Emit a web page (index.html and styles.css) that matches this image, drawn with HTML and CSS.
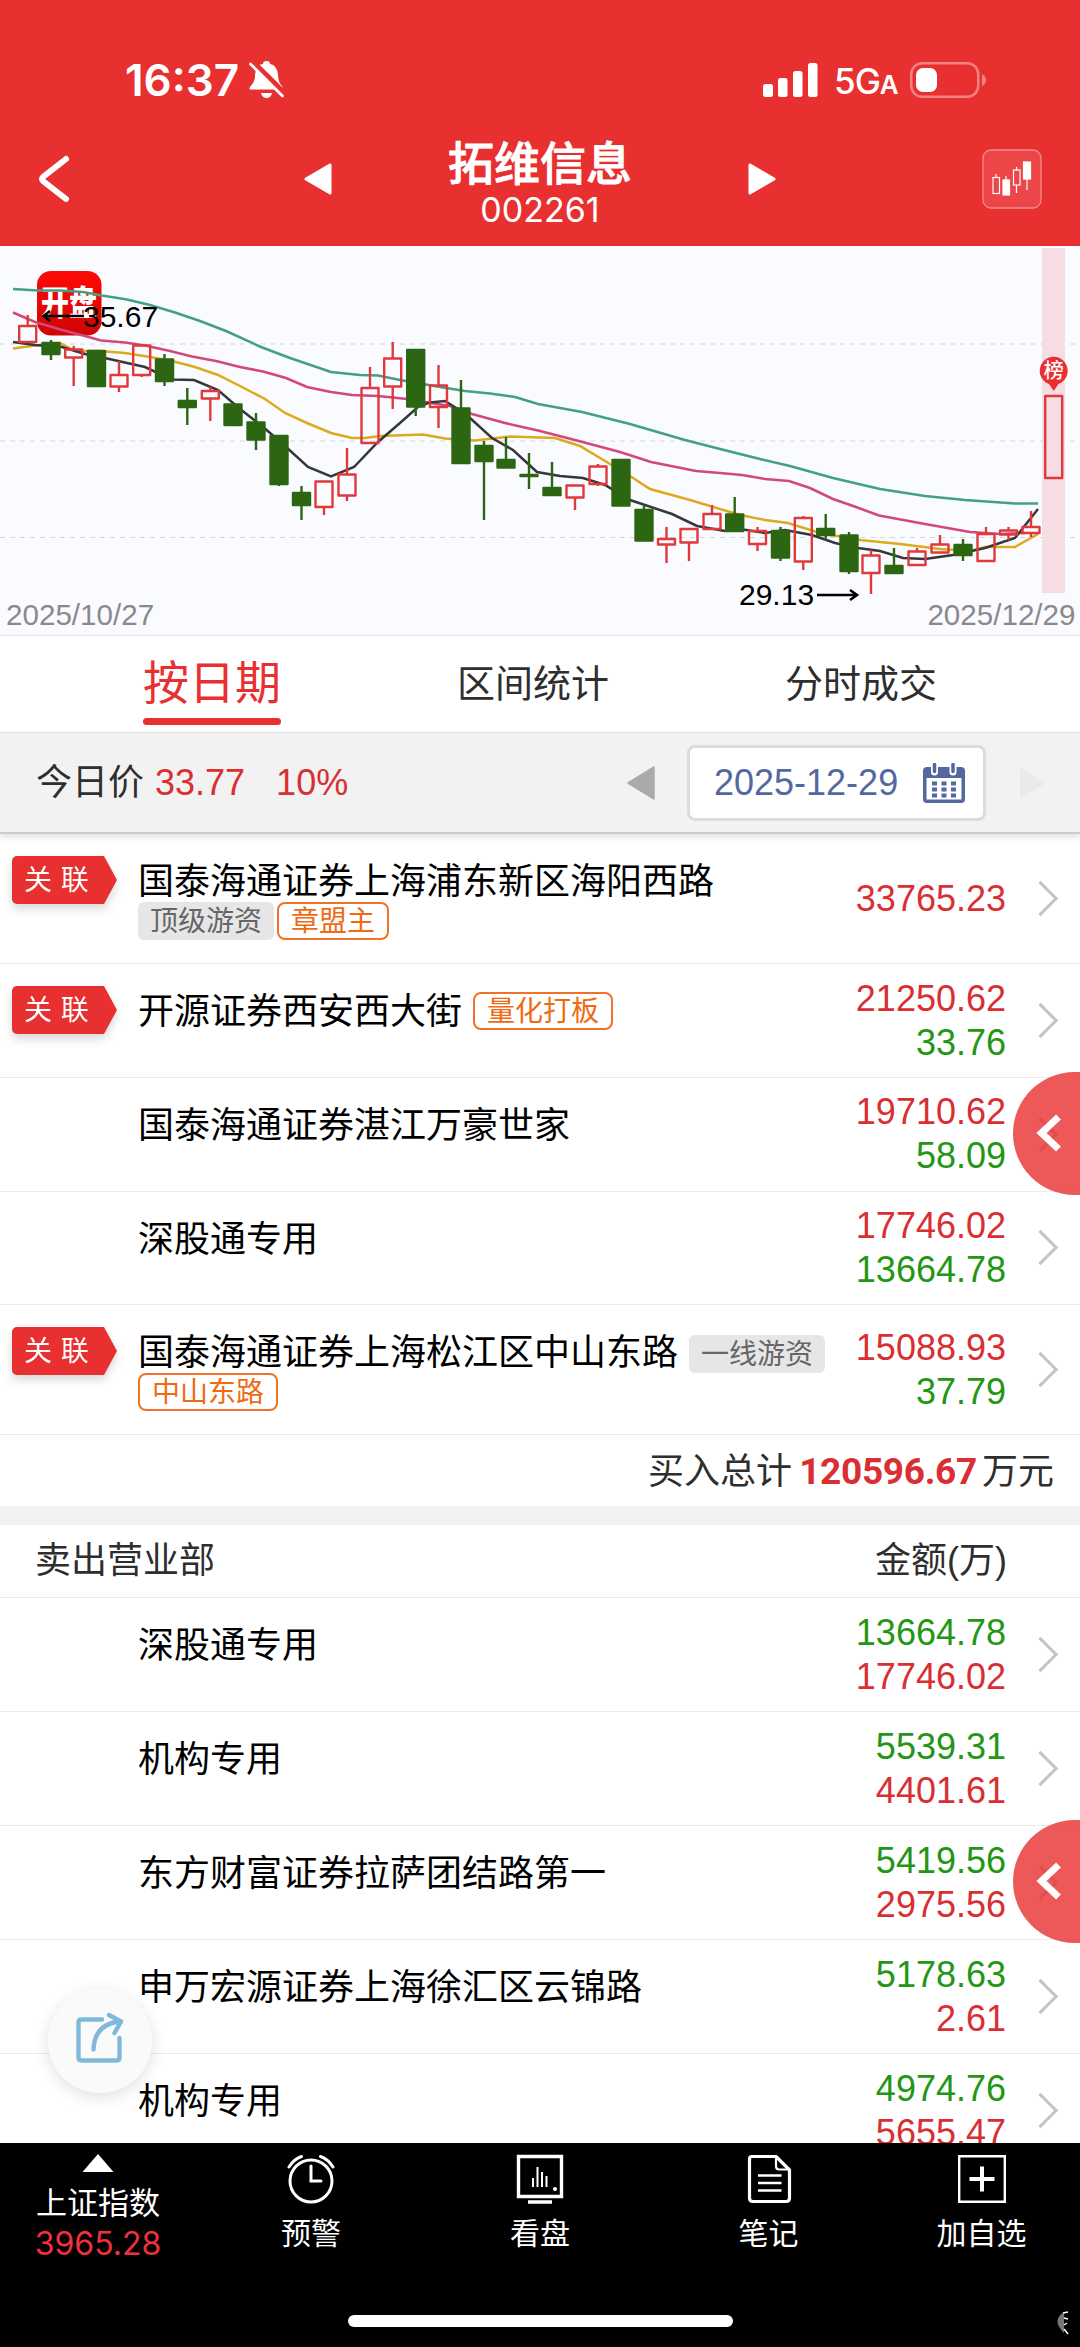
FILE: index.html
```html
<!DOCTYPE html>
<html lang="zh-CN">
<head>
  <meta charset="UTF-8" />
  <meta name="viewport" content="width=device-width, initial-scale=1.0" />
  <title>拓维信息 002261</title>
  <link rel="stylesheet" href="styles.css">
</head>
<body>
  <header>
    <div class="status-bar">
      <div class="status-left">
        <span class="time">16:37</span>
        <svg class="bell" width="36" height="38" viewBox="0 0 36 38">
          <path d="M5 25 V27 Q5 28.500 2 28.500 H1 Q0 28 1 26 Q5 22 6 17 V14 Q7 3 14 3 Q14 0 17.500 0 Q21 0 21 3 Q28 4 29 14 Q29.500 22 33 25 Q34.500 28.500 32 28.500 H3 Z M12 32 H23 Q22 37 17.500 37 Q13 37 12 32 Z" fill="#fff"/>
          <path d="M2 0 L36 34" stroke="#e83030" stroke-width="7"/>
          <path d="M1.500 3 L33.500 35" stroke="#fff" stroke-width="2.800" stroke-linecap="round"/>
        </svg>
      </div>
      <div class="status-right">
        <svg width="55" height="36" viewBox="0 0 55 36" fill="#fff">
          <rect x="0" y="22" width="10" height="13" rx="2.500"/>
          <rect x="15" y="16" width="9.500" height="19" rx="2.500"/>
          <rect x="30" y="9" width="9.500" height="26" rx="2.500"/>
          <rect x="45" y="1" width="9.500" height="34" rx="2.500"/>
        </svg>
        <span class="network">5G<small>A</small></span>
        <svg width="77" height="36" viewBox="0 0 77 36">
          <rect x="1.250" y="1.250" width="67" height="33.500" rx="11" fill="none" stroke="#f58080" stroke-width="2.500"/>
          <rect x="6" y="6" width="21" height="24" rx="7" fill="#fff"/>
          <path d="M72 12 Q76 14 76 18 Q76 22 72 24 Z" fill="#f58080"/>
        </svg>
      </div>
    </div>
    <div class="nav-bar">
      <svg class="back" width="34" height="48" viewBox="0 0 34 48">
        <path d="M29 4 L6 22 Q4 24 6 26 L29 44" fill="none" stroke="#fff" stroke-width="6" stroke-linecap="round"/>
      </svg>
      <svg width="28" height="32" viewBox="0 0 28 32"><path d="M26 2 V30 L2 16 Z" fill="#fff" stroke="#fff" stroke-width="3" stroke-linejoin="round"/></svg>
      <div class="title">
        <h1>拓维信息</h1>
        <p>002261</p>
      </div>
      <svg width="28" height="32" viewBox="0 0 28 32"><path d="M2 2 V30 L26 16 Z" fill="#fff" stroke="#fff" stroke-width="3" stroke-linejoin="round"/></svg>
      <svg class="kline-btn" width="60" height="60" viewBox="0 0 60 60">
        <rect x="1" y="1" width="58" height="58" rx="8" fill="#ed4649" stroke="#f58a8a" stroke-width="1.300"/>
        <g stroke="#fff" stroke-width="1.200" fill="none">
          <path d="M14 25 V28 M24 27 V31 M34.500 18 V22 M34.500 36 V44 M45 30 V41"/>
          <rect x="11" y="28.500" width="6.500" height="16"/>
          <rect x="21" y="31" width="6.500" height="15" fill="#fff"/>
          <rect x="31.500" y="21" width="6.500" height="15"/>
          <rect x="41.500" y="13" width="7" height="17" fill="#fff"/>
        </g>
      </svg>
    </div>
  </header>

  <div class="chart">
    <svg id="kline" width="1080" height="389" viewBox="0 246 1080 389">
      <g class="grid">
        <path d="M0 344 H1080 M0 441 H1080 M0 537.500 H1080"/>
      </g>
      <rect x="1042" y="248" width="23" height="345" fill="#f6dde4"/>
      <defs>
        <linearGradient id="logo" x1="0" y1="0" x2="0" y2="1">
          <stop offset="0" stop-color="#ff0a06"/>
          <stop offset="1" stop-color="#cf0505"/>
        </linearGradient>
      </defs>
      <rect x="37" y="271" width="64.500" height="64.500" rx="14" fill="url(#logo)"/>
      <text class="logo-text" x="41" y="0" transform="translate(0 315) scale(1 1.200)">开盘</text>
      <g class="ma">
        <polyline stroke="#43a083" points="13,289 38,290.500 60,290.500 83,292 102,295.500 127,299.500 150,305 175,312.500 200,321 226,331 261,347 290,358 331,372 360,375 378,375.500 400,380 440,387 465,391 490,393.500 515,397 538,404 582,412 630,424 685,440 720,449 760,459 790,466 833,478 880,489 925,496 965,500 1015,503.500 1038,503.500"/>
        <polyline stroke="#d2477c" points="13,312.500 35,322 62,330 85,336 101,340.500 125,342.500 145,345.500 170,351 192,356.500 216,361 240,367 263,371.500 286,378 307,387 331,392 352,395 378,396 407,399 425,402 450,406 472,414 505,423 540,431 575,440 620,452 651,462 696,471 720,473 742,475 765,479 789,481 810,488 833,499 856,507 879,515.500 925,524 970,532 1000,534 1025,533"/>
        <polyline stroke="#dcaa1c" points="13,348.500 35,345.500 60,343 75,351 100,351 125,353 150,357 172,361 195,367 218,375 240,386 265,399 285,413 307,423 331,433 352,438 365,438 380,436 423,434.500 445,438.500 475,440.500 510,436.500 555,438 580,446 610,464 630,476 650,489 690,500 740,515 765,520 788,523 820,533 860,540 900,544 940,549 971,551 985,547 1015,547 1038,534"/>
        <polyline stroke="#34373c" points="13,342 35,345 62,347 85,354 107,358.500 145,367 160,374 172,379.500 194,380 218,390 240,409 262,426 285,446 308,467 331,476.500 354,467 378,442 400,423 419,406 430,402.500 445,401 461,411 470,418 492,438 513,450 537,472 560,476 583,478 605,485 630,500 672,514 697,526 725,531 740,529 765,533 785,530 812,535 835,543 858,548 880,551 903,558 925,559 953,555 985,548 1015,538 1038,509"/>
      </g>
      <g id="candles"></g>
      <g class="mark">
        <path d="M44 316 H84 M50 311 L43.500 316 L50 321"/>
        <text x="83" y="326.500">35.67</text>
        <text x="739" y="604.500">29.13</text>
        <path d="M817 595 H856 M850 590 L857 595 L850 600"/>
      </g>
      <path d="M1053.700 391 L1049 384 A14 14 0 1 1 1058.400 384 Z" fill="#e83030"/>
      <text class="pin-text" x="1053.700" y="378">榜</text>
      <text class="date" x="6" y="624.500">2025/10/27</text>
      <text class="date" x="1075.500" y="624.500" text-anchor="end">2025/12/29</text>
    </svg>
  </div>

  <nav class="tabs">
    <span class="tab active">按日期</span>
    <span class="tab">区间统计</span>
    <span class="tab">分时成交</span>
  </nav>

  <div class="price-bar">
    <span>今日价</span>
    <span class="red price">33.77</span>
    <span class="red pct">10%</span>
    <svg class="prev" width="28" height="34" viewBox="0 0 28 34"><path d="M27 1 V33 L1 17 Z" fill="#aaa" stroke="#aaa" stroke-width="1.500" stroke-linejoin="round"/></svg>
    <div class="date-box">
      <span>2025-12-29</span>
      <svg width="42" height="40" viewBox="0 0 42 40">
        <rect x="0" y="4" width="42" height="36" rx="4" fill="#5468a0"/>
        <rect x="3.500" y="15" width="35" height="21.500" fill="#fff"/>
        <path d="M11.500 2 V9 M30 2 V9" stroke="#fff" stroke-width="7" stroke-linecap="round"/>
        <path d="M11.500 1.500 V8.500 M30 1.500 V8.500" stroke="#5468a0" stroke-width="3.500" stroke-linecap="round"/>
        <path d="M9 20.500 H33 M9 26.500 H33 M9 32.500 H33" stroke="#5468a0" stroke-width="4" stroke-dasharray="5 4.500"/>
      </svg>
    </div>
    <svg width="28" height="34" viewBox="0 0 28 34"><path d="M1 1 V33 L27 17 Z" fill="#eaeaea"/></svg>
  </div>

  <main>
    <section class="buy">
      <div class="row tall">
        <div class="link"><span class="ribbon">关 联</span></div>
        <div class="name"><span>国泰海通证券上海浦东新区海阳西路</span><em class="tag gray">顶级游资</em><em class="tag orange">章盟主</em></div>
        <div class="amount"><b class="red">33765.23</b></div>
        <i class="arrow"></i>
      </div>
      <div class="row">
        <div class="link"><span class="ribbon">关 联</span></div>
        <div class="name"><span>开源证券西安西大街</span><em class="tag orange">量化打板</em></div>
        <div class="amount"><b class="red">21250.62</b><b class="green">33.76</b></div>
        <i class="arrow"></i>
      </div>
      <div class="row">
        <div class="link"></div>
        <div class="name"><span>国泰海通证券湛江万豪世家</span></div>
        <div class="amount"><b class="red">19710.62</b><b class="green">58.09</b></div>
        <i class="arrow"></i>
      </div>
      <div class="row">
        <div class="link"></div>
        <div class="name"><span>深股通专用</span></div>
        <div class="amount"><b class="red">17746.02</b><b class="green">13664.78</b></div>
        <i class="arrow"></i>
      </div>
      <div class="row tall">
        <div class="link"><span class="ribbon">关 联</span></div>
        <div class="name"><span>国泰海通证券上海松江区中山东路</span><em class="tag gray">一线游资</em><em class="tag orange">中山东路</em></div>
        <div class="amount"><b class="red">15088.93</b><b class="green">37.79</b></div>
        <i class="arrow"></i>
      </div>
      <div class="total">买入总计<strong>120596.67</strong>万元</div>
    </section>

    <section class="sell">
      <div class="list-head"><span>卖出营业部</span><span>金额(万)</span></div>
      <div class="row">
        <div class="link"></div>
        <div class="name"><span>深股通专用</span></div>
        <div class="amount"><b class="green">13664.78</b><b class="red">17746.02</b></div>
        <i class="arrow"></i>
      </div>
      <div class="row">
        <div class="link"></div>
        <div class="name"><span>机构专用</span></div>
        <div class="amount"><b class="green">5539.31</b><b class="red">4401.61</b></div>
        <i class="arrow"></i>
      </div>
      <div class="row">
        <div class="link"></div>
        <div class="name"><span>东方财富证券拉萨团结路第一</span></div>
        <div class="amount"><b class="green">5419.56</b><b class="red">2975.56</b></div>
        <i class="arrow"></i>
      </div>
      <div class="row">
        <div class="link"></div>
        <div class="name"><span>申万宏源证券上海徐汇区云锦路</span></div>
        <div class="amount"><b class="green">5178.63</b><b class="red">2.61</b></div>
        <i class="arrow"></i>
      </div>
      <div class="row">
        <div class="link"></div>
        <div class="name"><span>机构专用</span></div>
        <div class="amount"><b class="green">4974.76</b><b class="red">5655.47</b></div>
        <i class="arrow"></i>
      </div>
    </section>
  </main>

  <div class="drawer drawer-buy">
    <svg width="26" height="40" viewBox="0 0 26 40"><path d="M22.500 4 L5.500 20 L22.500 36" fill="none" stroke="#fff" stroke-width="7"/></svg>
  </div>
  <div class="drawer drawer-sell">
    <svg width="26" height="40" viewBox="0 0 26 40"><path d="M22.500 4 L5.500 20 L22.500 36" fill="none" stroke="#fff" stroke-width="7"/></svg>
  </div>
  <div class="share">
    <svg width="48" height="52" viewBox="0 0 48 52" fill="none" stroke="#7fb8d8" stroke-width="4.400" stroke-linecap="round" stroke-linejoin="round">
      <path d="M26 7.500 H5.500 Q2.500 7.500 2.500 10.500 V45.500 Q2.500 48.500 5.500 48.500 H40.500 Q43.500 48.500 43.500 45.500 V26"/>
      <path d="M17.500 37.500 Q18.500 12 44 9.500 M33 3 L45 9.500 L38.500 21"/>
    </svg>
  </div>

  <footer>
    <div class="tool index">
      <svg width="32" height="18" viewBox="0 0 32 18"><path d="M16 0 L31.500 18 H0.500 Z" fill="#fff"/></svg>
      <span>上证指数</span>
      <span class="index-value">3965.28</span>
    </div>
    <div class="tool">
      <svg width="48" height="50" viewBox="0 0 48 50" fill="none" stroke="#fff" stroke-width="3" stroke-linecap="round">
        <circle cx="24" cy="27" r="21"/>
        <path d="M2 13 Q7 5 14.500 2.500 M46 13 Q41 5 33.500 2.500 M24 12 V27 H34"/>
      </svg>
      <span>预警</span>
    </div>
    <div class="tool">
      <svg width="48" height="50" viewBox="0 0 48 50" fill="none" stroke="#fff" stroke-width="3.400">
        <path d="M2.500 2.500 H45.500 V42.500 H2.500 Z M12 48 H36"/>
        <path d="M17 33 V24 M21.500 33 V13 M26 33 V18 M30.500 33 V22" stroke-width="2"/>
        <circle cx="39" cy="35" r="2" fill="#fff" stroke="none"/>
      </svg>
      <span>看盘</span>
    </div>
    <div class="tool">
      <svg width="48" height="50" viewBox="0 0 48 50" fill="none" stroke="#fff" stroke-width="3.200" stroke-linejoin="round">
        <path d="M7 2.500 H31 L44.500 16 V44 Q44.500 47.500 41 47.500 H8 Q4.500 47.500 4.500 44 V5 Q4.500 2.500 7 2.500 Z"/>
        <path d="M31 3 V12 Q31 15.500 34 15.500 H44" stroke-width="2.200"/>
        <path d="M13 21.500 H36.500 M13 29 H36.500 M13 36.500 H36.500" stroke-width="2.600"/>
      </svg>
      <span>笔记</span>
    </div>
    <div class="tool">
      <svg width="48" height="50" viewBox="0 0 48 50" fill="none" stroke="#fff">
        <path d="M1.200 2.200 H46.800 V47.800 H1.200 Z" stroke-width="2.400"/>
        <path d="M24 12.500 V37.500 M11.500 25 H36.500" stroke-width="4"/>
      </svg>
      <span>加自选</span>
    </div>
    <div class="home-indicator"></div>
    <svg class="corner" width="16" height="24" viewBox="0 0 16 24">
      <path d="M10 1 Q-3 9 10 22 Z" fill="#777"/>
      <path d="M9 2 L14 1 M10 7 L14 8 M10 14 L13 12 M10 18 L14 23" stroke="#fff" stroke-width="1.500"/>
    </svg>
  </footer>

  <script src="chart.js"></script>
</body>
</html>
```
FILE: styles.css
```css
:root {
  --red: #e83030;
  --num-red: #d92f33;
  --num-green: #239614;
  --line: #ececec;
}

* {
  margin: 0;
  padding: 0;
  box-sizing: border-box;
}

body {
  position: relative;
  display: flex;
  flex-direction: column;
  width: 1080px;
  height: 2347px;
  overflow: hidden;
  background: #fff;
  color: #2e2e2e;
  font-family: "Liberation Sans", "Noto Sans CJK SC", sans-serif;
  font-size: 36px;
}

svg {
  display: block;
  flex: none;
}

.red {
  color: var(--num-red);
}

.green {
  color: var(--num-green);
}

/* header */
header {
  height: 246px;
  background: var(--red);
  color: #fff;
}

.status-bar {
  display: flex;
  justify-content: space-between;
  align-items: center;
  height: 132px;
  padding: 27px 93px 0 125px;
}

.status-left,
.status-right {
  display: flex;
  align-items: center;
}

.time {
  font-family: Inter, sans-serif;
  font-size: 44px;
  font-weight: 600;
  width: 124px;
  white-space: nowrap;
}

.network {
  width: 76px;
  margin-left: 16px;
  font-family: Inter, sans-serif;
  font-size: 35px;
  font-weight: 500;
  letter-spacing: -1px;
  white-space: nowrap;
  padding-top: 3px;
}

.network small {
  font-size: 26px;
  font-weight: 600;
}

.nav-bar {
  display: flex;
  align-items: center;
  height: 93px;
  padding: 0 38px 0 37px;
}

.nav-bar .back {
  margin-right: 233px;
}

.title {
  width: 416px;
  padding-top: 6px;
  text-align: center;
}

.title h1 {
  font-size: 46px;
  font-weight: 500;
  line-height: 56px;
  -webkit-text-stroke: 0.8px #fff;
}

.title p {
  font-family: Inter, sans-serif;
  font-size: 34px;
  line-height: 36px;
}

.kline-btn {
  margin-left: auto;
}

/* k-line chart */
.chart {
  height: 390px;
  background: #fafbff;
  border-bottom: 1px solid #e2e4e8;
}

.chart text {
  font-size: 30px;
}

.grid path {
  stroke: #d4d6dd;
  stroke-width: 1;
  stroke-dasharray: 5 5;
}

.ma polyline {
  fill: none;
  stroke-width: 2.500;
}

.up {
  fill: none;
  stroke: #e0393c;
  stroke-width: 2.400;
}

.down {
  fill: #2c6612;
  stroke: #2c6612;
  stroke-width: 2.400;
}

.mark path {
  fill: none;
  stroke: #000;
  stroke-width: 2.600;
}

.chart .logo-text {
  font-size: 28px;
  font-weight: 900;
  fill: #fff;
}

.chart .pin-text {
  font-size: 20px;
  font-weight: 500;
  fill: #fff;
  text-anchor: middle;
}

.chart .date {
  font-size: 29.6px;
  fill: #8a8a8a;
}

/* tabs */
.tabs {
  display: flex;
  justify-content: space-between;
  height: 97px;
  padding: 14px 143px 7px;
  border-bottom: 1px solid #e4e4e4;
}

.tab {
  height: 76px;
  font-size: 38px;
  line-height: 68px;
}

.tab.active {
  position: relative;
  color: var(--red);
  font-size: 46px;
  line-height: 67px;
}

.tab.active::after {
  content: "";
  position: absolute;
  left: 0;
  right: 0;
  bottom: 1px;
  height: 7px;
  border-radius: 4px;
  background: var(--red);
}

/* price and date */
.price-bar {
  position: relative;
  display: flex;
  align-items: center;
  height: 101px;
  padding: 0 33px 0 36px;
  background: #f2f2f2;
  border-bottom: 2px solid #ccc;
  box-shadow: 0 3px 6px rgba(0, 0, 0, 0.12);
  line-height: 42px;
}

.price {
  margin-left: 11px;
}

.pct {
  margin-left: 31px;
}

.prev {
  margin-left: auto;
}

.date-box {
  display: flex;
  align-items: center;
  justify-content: space-between;
  width: 299px;
  height: 76px;
  margin: 0 33px 0 32px;
  padding: 0 18px 0 24px;
  border: 3px solid #dcdcdc;
  border-radius: 8px;
  background: #fff;
  color: #5468a0;
}

/* broker list */
main {
  flex: 1;
  min-height: 0;
  overflow: hidden;
}

.row {
  display: flex;
  align-items: center;
  height: 114px;
  padding-right: 23px;
  border-bottom: 1px solid var(--line);
}

.row.tall {
  height: 130px;
}

.buy .row:nth-child(3),
.buy .row:nth-child(4) {
  height: 113.5px;
}

.link {
  align-self: flex-start;
  width: 138px;
  padding: 22px 0 0 12px;
}

.ribbon {
  display: block;
  width: 105px;
  height: 48px;
  padding-left: 12px;
  color: #fff;
  font-size: 28px;
  line-height: 50px;
  letter-spacing: 0.5px;
  background: var(--red);
  border-radius: 5px 0 0 5px;
  clip-path: polygon(0 0, 92px 0, 100% 50%, 92px 100%, 0 100%);
}

.link:has(.ribbon) {
  filter: drop-shadow(0 5px 5px rgba(0, 0, 0, 0.15));
}

.name {
  display: flex;
  flex-wrap: wrap;
  align-self: flex-start;
  width: 700px;
  padding-top: 28px;
  column-gap: 11px;
  color: #000;
  line-height: 40px;
}

.tag {
  height: 38px;
  padding: 0 12px;
  border-radius: 6px;
  font-size: 28px;
  font-style: normal;
}

.tag.gray {
  align-self: flex-end;
  background: #e6e6e6;
  color: #666;
  line-height: 39px;
}

.tag.orange {
  border: 2.6px solid #ef7228;
  border-radius: 8px;
  line-height: 35px;
  color: #ef6a12;
}

.buy .tall:first-child .orange {
  margin-left: -8px;
}

.amount {
  display: flex;
  flex-direction: column;
  flex: 1;
  text-align: right;
}

.amount b {
  font-weight: 400;
  line-height: 44px;
}

.arrow {
  width: 25px;
  height: 25px;
  margin: 0 4px 0 22px;
  border: solid #c4c4c4;
  border-width: 3px 3px 0 0;
  transform: rotate(45deg);
}

.total {
  height: 71px;
  padding-right: 26px;
  text-align: right;
  line-height: 73px;
}

.total strong {
  margin: 0 5px 0 7px;
  color: var(--num-red);
  font-family: Roboto, sans-serif;
  font-size: 37px;
  letter-spacing: -0.3px;
}

.sell {
  border-top: 19px solid #f2f2f2;
}

.list-head {
  display: flex;
  justify-content: space-between;
  height: 73px;
  padding: 0 73px 0 35px;
  line-height: 71px;
  border-bottom: 1px solid var(--line);
}

/* floating buttons */
.drawer {
  position: absolute;
  right: 0;
  width: 67px;
  height: 123px;
  border-radius: 62px 0 0 62px;
  background: rgba(232, 48, 48, 0.8);
  padding: 41px 0 0 23px;
}

.drawer-buy {
  top: 1072px;
}

.drawer-sell {
  top: 1820px;
}

.share {
  position: absolute;
  left: 48px;
  top: 1989px;
  width: 104px;
  height: 104px;
  padding: 23px 0 0 28px;
  border-radius: 50%;
  background: rgba(250, 250, 250, 0.96);
  box-shadow: 0 4px 16px rgba(0, 0, 0, 0.13);
}

/* bottom toolbar */
footer {
  position: relative;
  display: grid;
  grid-template-columns: 196px 230px 228px 229px 197px;
  height: 204px;
  background: #000;
  color: #fff;
}

.tool {
  display: flex;
  flex-direction: column;
  align-items: center;
  padding-top: 11px;
  font-size: 30px;
}

.tool span {
  margin-top: 8px;
  line-height: 44px;
}

.tool.index span {
  font-size: 31px;
  line-height: 40px;
  margin-top: 12px;
}

.tool.index .index-value {
  margin-top: 0;
  color: #f0303f;
  font-family: Inter, sans-serif;
  font-size: 32px;
}

.home-indicator {
  position: absolute;
  left: 348px;
  top: 172px;
  width: 385px;
  height: 12px;
  border-radius: 6px;
  background: #fff;
}

.corner {
  position: absolute;
  right: 10px;
  bottom: 12px;
}
```
FILE: chart.js
```js
// [type, center x, body top, body bottom, high, low]
const candles = [
  ['up', 27.7, 326, 342, 315, 342],
  ['down', 51, 342, 355, 340, 360],
  ['up', 73.7, 349.5, 357.5, 346, 386],
  ['down', 96.5, 350, 387, 350, 387],
  ['up', 119, 375, 386.5, 361, 392],
  ['up', 141.7, 345.5, 375, 345, 377],
  ['down', 164.5, 358.5, 382, 354, 386],
  ['down', 187.3, 400, 408, 388, 425],
  ['up', 210.3, 391, 398.5, 387, 421],
  ['down', 233, 403.5, 426, 403, 426],
  ['down', 256, 421.5, 440.5, 413, 450],
  ['down', 279, 435, 485, 435, 486],
  ['down', 301.5, 492, 506, 486, 520],
  ['up', 324, 481.5, 507, 481, 515],
  ['up', 347, 474.5, 495.5, 448, 501],
  ['up', 370, 388, 443, 367, 443],
  ['up', 392.7, 358.5, 386.5, 342, 409],
  ['down', 415.7, 349, 407.5, 349, 416],
  ['up', 438.5, 385.5, 407, 365, 428],
  ['down', 461, 407.5, 464, 380, 464],
  ['down', 484, 445, 462, 441, 520],
  ['down', 506, 459, 468.5, 437, 468],
  ['down', 529, 474, 477, 453, 489],
  ['down', 552, 487, 496, 462, 496],
  ['up', 575, 485.5, 497.5, 485, 510],
  ['up', 598, 466.5, 484, 464, 486],
  ['down', 621, 459, 506.5, 459, 506],
  ['down', 644, 509, 541.5, 505, 541],
  ['up', 666.5, 539, 544.5, 527, 563],
  ['up', 689, 529, 542.5, 529, 561],
  ['up', 712, 514, 529, 505, 529],
  ['down', 734.7, 513.5, 532, 497, 532],
  ['up', 757.5, 531, 544, 527, 551],
  ['down', 780.5, 530, 558.5, 527, 561],
  ['up', 803.3, 518, 561.5, 516, 570],
  ['down', 825.7, 528, 536, 514, 540],
  ['down', 849, 534.5, 572, 532, 574],
  ['up', 871, 555.5, 573, 550, 594],
  ['down', 894, 565, 574, 548, 574],
  ['up', 917, 551.5, 565, 548, 565],
  ['up', 940, 544.5, 552.5, 535, 552],
  ['down', 963, 544, 556, 539, 561],
  ['up', 986, 534, 561, 527, 561],
  ['up', 1008.5, 530.5, 534.5, 527, 540],
  ['up', 1031, 527, 533, 511, 537],
  ['up', 1053.7, 396, 478, 396, 478]
];

const group = document.getElementById('candles');

candles.forEach(([type, x, top, bottom, high, low]) => {
  const path = document.createElementNS('http://www.w3.org/2000/svg', 'path');
  // down bodies are filled, so pull the edge in by the stroke width
  const inset = type === 'down' ? 1 : 0;
  const t = top + inset;
  const b = bottom - inset;
  path.setAttribute('class', type);
  path.setAttribute('stroke-linejoin', 'round');
  path.setAttribute('d',
    `M${x - 8.5} ${t} H${x + 8.5} V${b} H${x - 8.5} Z M${x} ${high} V${Math.max(t, high)} M${x} ${b} V${Math.max(b, low)}`);
  group.appendChild(path);
});
```
